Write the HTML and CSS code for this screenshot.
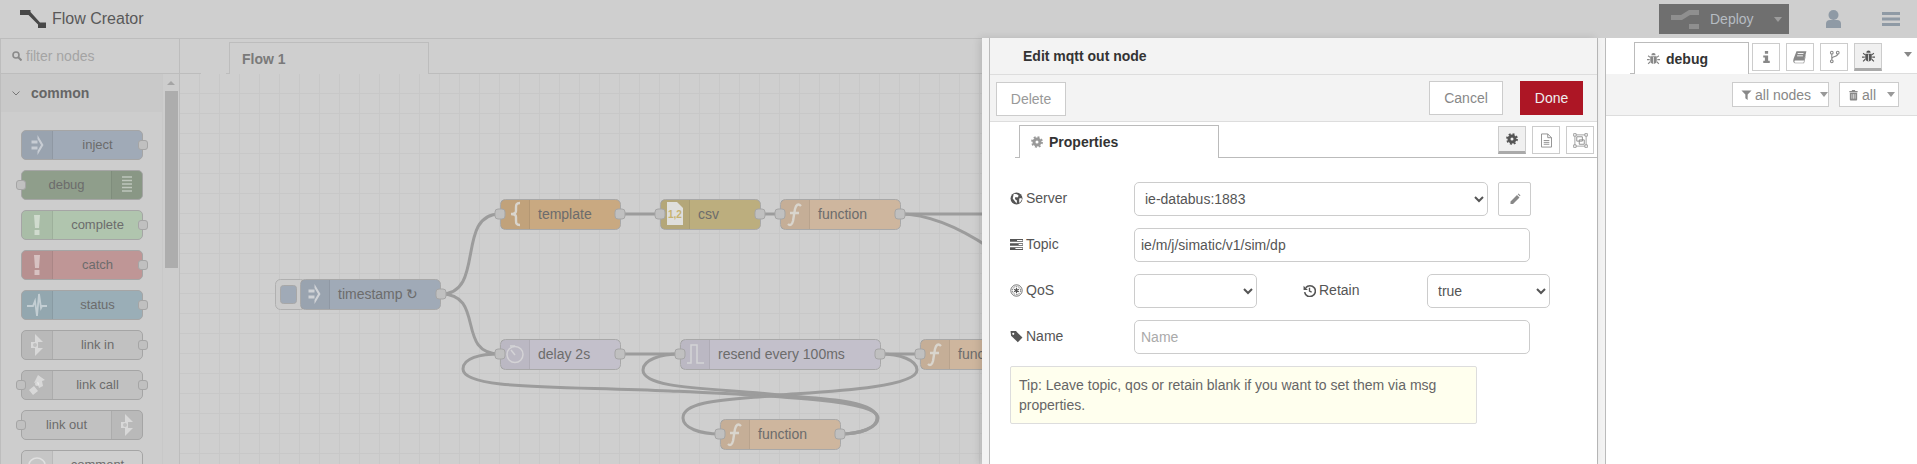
FILE: index.html
```html
<!DOCTYPE html>
<html lang="en">
<head>
<meta charset="utf-8">
<title>Flow Creator</title>
<link rel="stylesheet" href="styles.css">
</head>
<body>
<svg class="defs" aria-hidden="true">
  <symbol id="i-gear" viewBox="0 0 24 24"><circle cx="12" cy="12" r="6" fill="none" stroke="currentColor" stroke-width="6"/><circle cx="12" cy="12" r="10" fill="none" stroke="currentColor" stroke-width="3.600" stroke-dasharray="3.900 3.950"/></symbol>
  <symbol id="i-globe" viewBox="0 0 24 24"><circle cx="12" cy="12" r="11" fill="currentColor"/><path d="M7 3l6 1 3 3-2 3-4-1-1 4 4 3-1 5-3-4-4-5zM17 12l4-1 1 3-3 5-2 1z" fill="#fff"/></symbol>
  <symbol id="i-tasks" viewBox="0 0 24 24"><path d="M0 2h24v5H0zM0 9.500h24v5H0zM0 17h24v5H0z" fill="currentColor"/><path d="M13 3.500h10v2H13zM16 11h7v2h-7zM10 18.500h13v2H10z" fill="#fff"/></symbol>
  <symbol id="i-empire" viewBox="0 0 24 24"><circle cx="12" cy="12" r="10.500" fill="none" stroke="currentColor" stroke-width="1.500"/><circle cx="12" cy="12" r="7.500" fill="none" stroke="currentColor" stroke-width="1.500" stroke-dasharray="3 1.700"/><path d="M12 7v10M7.700 9.500l8.600 5M16.300 9.500l-8.600 5" stroke="currentColor" stroke-width="2.200"/></symbol>
  <symbol id="i-tag" viewBox="0 0 24 24"><path d="M1 2h10l12 12-8.500 8.500L2 10.500z" fill="currentColor"/><circle cx="6" cy="7" r="2" fill="#fff"/></symbol>
  <symbol id="i-history" viewBox="0 0 24 24"><path d="M5 7a10 10 0 1 1-2 8" fill="none" stroke="currentColor" stroke-width="3"/><path d="M1 3l8 8H1z" fill="currentColor"/><path d="M12 7v6l4 2" fill="none" stroke="currentColor" stroke-width="2.500"/></symbol>
  <symbol id="i-file" viewBox="0 0 24 24"><path d="M4 1.500h10l6 6v15H4zM14 1.500v6h6M7.500 12h9M7.500 15h9M7.500 18h9" fill="none" stroke="currentColor" stroke-width="1.400"/></symbol>
  <symbol id="i-group" viewBox="0 0 24 24"><path d="M3 3h18v18H3z" fill="none" stroke="currentColor" stroke-width="1.200"/><path d="M6 6h9v7H6zM10 11h8v7h-8z" fill="none" stroke="currentColor" stroke-width="1.400"/><path d="M1 1h4v4H1zM19 1h4v4h-4zM1 19h4v4H1zM19 19h4v4h-4z" fill="#fff" stroke="currentColor" stroke-width="1.200"/></symbol>
  <symbol id="i-pencil" viewBox="0 0 24 24"><path d="M3 17L16 4l5 5L8 22H3zM17.500 2.500l1.500-1.500 4 4-1.500 1.500z" fill="currentColor"/></symbol>
  <symbol id="i-info" viewBox="0 0 24 24"><path d="M9 1h6v5H9zM6 9h9v10h3v4H6v-4h3v-6H6z" fill="currentColor"/></symbol>
  <symbol id="i-book" viewBox="0 0 24 24"><path d="M6 2h17l-4 16H3.500C2 18 2 22 4 22h14l4-14v2l-3 12.500H3C0 22 0 18 1 15z" fill="currentColor"/><path d="M8 6h10M7 10h10" stroke="#fff" stroke-width="1.500"/></symbol>
  <symbol id="i-fork" viewBox="0 0 24 24"><g fill="none" stroke="currentColor" stroke-width="2"><circle cx="7" cy="4" r="2.500"/><circle cx="18" cy="4" r="2.500"/><circle cx="7" cy="20" r="2.500"/><path d="M7 6.500v11M18 6.500c0 6-11 3-11 9"/></g></symbol>
  <symbol id="i-bug" viewBox="0 0 24 24"><path d="M7 8h10c1 0 1 1 1 1v7c0 4-4 6-6 6s-6-2-6-6V9s0-1 1-1zM8 6a4 4 0 0 1 8 0z" fill="currentColor"/><path d="M12 9v13" stroke="#fff" stroke-width="1.300"/><path d="M6 10L2 7M18 10l4-3M5 14H0M19 14h5M6 18l-4 4M18 18l4 4" stroke="currentColor" stroke-width="2"/></symbol>
  <symbol id="i-filter" viewBox="0 0 24 24"><path d="M1 2h22l-8.500 9v12L9.500 19v-8z" fill="currentColor"/></symbol>
  <symbol id="i-trash" viewBox="0 0 24 24"><path d="M8 3l1-2h6l1 2h5v3H3V3zM4 7h16v15q0 2-2 2H6q-2 0-2-2z" fill="currentColor"/><path d="M8.500 10v10M12 10v10M15.500 10v10" stroke="#fff" stroke-width="1.300"/></symbol>
  <symbol id="n-inject" viewBox="0 0 12 20"><path d="M0 5.500h6v3H0zM0 11.500h6v3H0zM6 0l6 10-6 10v-4l3.500-6L6 4z" fill="currentColor"/></symbol>
  <symbol id="n-debug" viewBox="0 0 10 18"><path d="M0 1h10M0 4.500h10M0 8h10M0 11.500h10M0 15h10" stroke="currentColor" stroke-width="1.600"/></symbol>
  <symbol id="n-alert" viewBox="0 0 8 20"><path d="M1 0h6l-1 13H2zM1.500 15h5v5h-5z" fill="currentColor"/></symbol>
  <symbol id="n-status" viewBox="0 0 20 24"><path d="M0 13h6l2-5 2 15 2-22 2 14 1-2h5" fill="none" stroke="currentColor" stroke-width="1.800"/></symbol>
  <symbol id="n-link" viewBox="0 0 12 22"><path d="M4 0l8 8H4zM4 22l8-8H4zM0 8h7v6H0z" fill="currentColor"/><circle cx="4" cy="11" r="2" fill="#c0c0c0"/></symbol>
  <symbol id="n-call" viewBox="0 0 16 20"><path d="M9 0l7 5-3 1 1 5-4 2-2-6-3 1zM0 15l5-4 4 5-5 4z" fill="currentColor"/><circle cx="8" cy="9" r="2" fill="currentColor"/></symbol>
  <symbol id="n-comment" viewBox="0 0 20 20"><ellipse cx="10" cy="10" rx="8" ry="7" fill="none" stroke="currentColor" stroke-width="1.600"/></symbol>
</svg>

<header class="topbar">
  <svg class="logo" viewBox="0 0 26 18"><path d="M0 0h10.500v2L20 12.500h6V18h-8v-3.500L8.500 5H0z" fill="currentColor"/></svg>
  <span class="app-title">Flow Creator</span>
  <div class="deploy">
    <svg class="deploy-icon" viewBox="0 0 28 19"><path d="M0 5h10l8-5h10v5H19l-8 5H0zM18 14h10v5H18z" fill="currentColor"/></svg>
    <span class="deploy-label">Deploy</span>
    <span class="caret caret-deploy"></span>
  </div>
  <svg class="user" viewBox="0 0 15 18"><circle cx="7.500" cy="5" r="5" fill="currentColor"/><path d="M0 18v-4q0-4 4-4h7q4 0 4 4v4z" fill="currentColor"/></svg>
  <svg class="bars" viewBox="0 0 18 14"><path d="M0 0h18v3H0zM0 5.500h18v3H0zM0 11h18v3H0z" fill="currentColor"/></svg>
</header>

<main class="main">
  <aside class="palette">
    <div class="palette-search">
      <svg class="search-icon" viewBox="0 0 10 10"><circle cx="4" cy="4" r="3" fill="none" stroke="currentColor" stroke-width="1.600"/><path d="M6 6l3.500 3.500" stroke="currentColor" stroke-width="2"/></svg>
      <span>filter nodes</span>
    </div>
    <div class="palette-body">
      <div class="palette-list">
        <div class="cat-head">
          <svg class="chevron" viewBox="0 0 8 5"><path d="M.5.500L4 4 7.500.500" fill="none" stroke="currentColor"/></svg>
          <span>common</span>
        </div>
        <div class="cat-nodes">
          <div class="pnode c-inject"><span class="picon"><svg class="ic-inject"><use href="#n-inject"/></svg></span><span class="plabel">inject</span><i class="pport port-r"></i></div>
          <div class="pnode c-debug"><span class="plabel">debug</span><span class="picon picon-r"><svg class="ic-debug"><use href="#n-debug"/></svg></span><i class="pport port-l"></i></div>
          <div class="pnode c-complete"><span class="picon"><svg class="ic-alert"><use href="#n-alert"/></svg></span><span class="plabel">complete</span><i class="pport port-r"></i></div>
          <div class="pnode c-catch"><span class="picon"><svg class="ic-alert"><use href="#n-alert"/></svg></span><span class="plabel">catch</span><i class="pport port-r"></i></div>
          <div class="pnode c-status"><span class="picon"><svg class="ic-status"><use href="#n-status"/></svg></span><span class="plabel">status</span><i class="pport port-r"></i></div>
          <div class="pnode c-link"><span class="picon"><svg class="ic-link"><use href="#n-link"/></svg></span><span class="plabel">link in</span><i class="pport port-r"></i></div>
          <div class="pnode c-link"><span class="picon"><svg class="ic-call"><use href="#n-call"/></svg></span><span class="plabel">link call</span><i class="pport port-l"></i><i class="pport port-r"></i></div>
          <div class="pnode c-link"><span class="plabel">link out</span><span class="picon picon-r"><svg class="ic-link"><use href="#n-link"/></svg></span><i class="pport port-l"></i></div>
          <div class="pnode c-comment"><span class="picon"><svg class="ic-comment"><use href="#n-comment"/></svg></span><span class="plabel">comment</span></div>
        </div>
      </div>
      <div class="scrollbar">
        <span class="scroll-up"></span>
        <span class="scroll-thumb"></span>
      </div>
    </div>
  </aside>

  <section class="workspace">
    <div class="ws-tabs">
      <span class="ws-lead"></span>
      <span class="ws-tick"></span>
      <div class="ws-tab">Flow 1</div>
      <span class="ws-rest"></span>
    </div>
    <div class="chart">
      <svg class="flow" viewBox="180 74 820 390">
        <g class="wires">
          <path d="M441 294C486 294 455 214 500 214"/>
          <path d="M441 294C486 294 455 354 500 354"/>
          <path d="M620 214H660"/>
          <path d="M760 214H780"/>
          <path d="M900 214H990"/>
          <path d="M900 214C930 214 960 228 990 248"/>
          <path d="M620 354H680"/>
          <path d="M880 354H920"/>
          <path d="M840 434C860 434 878 428 878 418C878 400 780 396 670 391C560 386 463 390 463 369C463 358 480 354 500 354"/>
          <path d="M880 354C900 354 917 360 917 370C917 388 820 392 780 395C730 400 683 400 683 418C683 428 700 434 720 434"/>
          <path d="M840 434C860 434 877 428 877 418C877 398 800 398 780 395C720 388 643 390 643 370C643 360 660 354 680 354"/>
        </g>

        <g>
          <rect class="inject-btn" x="275.500" y="279.500" width="30" height="30" rx="5"/>
          <rect class="inject-btn-face" x="280.500" y="285.500" width="16" height="18" rx="3"/>
          <rect class="node n-blue" x="300.500" y="279.500" width="140" height="30" rx="5"/>
          <path class="node-shade" d="M301 280h28v29h-28z"/>
          <path class="node-sep" d="M329.500 280v29"/>
          <use class="node-icon" href="#n-inject" x="308" y="284" width="13" height="20"/>
          <text class="node-label" x="338" y="299">timestamp ↻</text>
          <rect class="port" x="436" y="289" width="10" height="10" rx="3"/>
        </g>

        <g>
          <rect class="node n-template" x="500.500" y="199.500" width="120" height="30" rx="5"/>
          <path class="node-shade" d="M501 200h28v29h-28z"/>
          <path class="node-sep" d="M529.500 200v29"/>
          <path class="node-stroke" d="M520 203c-4 0-4 2-4 5v3c0 2-2 3-5 3 3 0 5 1 5 3v3c0 3 0 5 4 5"/>
          <text class="node-label" x="538" y="219">template</text>
          <rect class="port" x="495" y="209" width="10" height="10" rx="3"/>
          <rect class="port" x="615" y="209" width="10" height="10" rx="3"/>
        </g>

        <g>
          <rect class="node n-csv" x="660.500" y="199.500" width="100" height="30" rx="5"/>
          <path class="node-shade" d="M661 200h28v29h-28z"/>
          <path class="node-sep" d="M689.500 200v29"/>
          <path class="csv-doc" d="M667 202h10l6 6v17h-16z"/>
          <text class="csv-text" x="668" y="218">1,2</text>
          <text class="node-label" x="698" y="219">csv</text>
          <rect class="port" x="655" y="209" width="10" height="10" rx="3"/>
          <rect class="port" x="755" y="209" width="10" height="10" rx="3"/>
        </g>

        <g>
          <rect class="node n-function" x="780.500" y="199.500" width="120" height="30" rx="5"/>
          <path class="node-shade" d="M781 200h28v29h-28z"/>
          <path class="node-sep" d="M809.500 200v29"/>
          <path class="node-stroke" d="M801 206c-3-3-5-1-6 3l-2 12c-1 4-3 5-5 3M790 213h9"/>
          <text class="node-label" x="818" y="219">function</text>
          <rect class="port" x="775" y="209" width="10" height="10" rx="3"/>
          <rect class="port" x="895" y="209" width="10" height="10" rx="3"/>
        </g>

        <g>
          <rect class="node n-lilac" x="500.500" y="339.500" width="120" height="30" rx="5"/>
          <path class="node-shade" d="M501 340h28v29h-28z"/>
          <path class="node-sep" d="M529.500 340v29"/>
          <circle class="node-thin" cx="515" cy="354.500" r="8"/>
          <path class="node-thin" d="M515 355l-4-5M510 346h5"/>
          <text class="node-label" x="538" y="359">delay 2s</text>
          <rect class="port" x="495" y="349" width="10" height="10" rx="3"/>
          <rect class="port" x="615" y="349" width="10" height="10" rx="3"/>
        </g>

        <g>
          <rect class="node n-lilac" x="680.500" y="339.500" width="200" height="30" rx="5"/>
          <path class="node-shade" d="M681 340h28v29h-28z"/>
          <path class="node-sep" d="M709.500 340v29"/>
          <path class="node-thin" d="M687 363h4v-18h6v18h7"/>
          <text class="node-label" x="718" y="359">resend every 100ms</text>
          <rect class="port" x="675" y="349" width="10" height="10" rx="3"/>
          <rect class="port" x="875" y="349" width="10" height="10" rx="3"/>
        </g>

        <g>
          <rect class="node n-function" x="920.500" y="339.500" width="120" height="30" rx="5"/>
          <path class="node-shade" d="M921 340h28v29h-28z"/>
          <path class="node-sep" d="M949.500 340v29"/>
          <path class="node-stroke" d="M941 346c-3-3-5-1-6 3l-2 12c-1 4-3 5-5 3M930 353h9"/>
          <text class="node-label" x="958" y="359">function</text>
          <rect class="port" x="915" y="349" width="10" height="10" rx="3"/>
        </g>

        <g>
          <rect class="node n-function" x="720.500" y="419.500" width="120" height="30" rx="5"/>
          <path class="node-shade" d="M721 420h28v29h-28z"/>
          <path class="node-sep" d="M749.500 420v29"/>
          <path class="node-stroke" d="M741 426c-3-3-5-1-6 3l-2 12c-1 4-3 5-5 3M730 433h9"/>
          <text class="node-label" x="758" y="439">function</text>
          <rect class="port" x="715" y="429" width="10" height="10" rx="3"/>
          <rect class="port" x="835" y="429" width="10" height="10" rx="3"/>
        </g>
      </svg>
    </div>

    <div class="tray">
      <div class="tray-handle"></div>
      <div class="tray-body">
        <div class="tray-title">Edit mqtt out node</div>
        <div class="tray-actions">
          <button class="btn btn-delete">Delete</button>
          <div class="tray-actions-right">
            <button class="btn btn-cancel">Cancel</button>
            <button class="btn btn-done">Done</button>
          </div>
        </div>
        <div class="tabbar tabbar-tray">
          <span class="tab-tick"></span>
          <div class="tab tab-props"><svg class="ic-tab"><use href="#i-gear"/></svg>Properties</div>
          <div class="tab-rest">
            <span class="icon-btn is-active"><svg class="ic-gear"><use href="#i-gear"/></svg></span>
            <span class="icon-btn"><svg class="ic-btn-lg"><use href="#i-file"/></svg></span>
            <span class="icon-btn"><svg class="ic-btn-lg"><use href="#i-group"/></svg></span>
          </div>
        </div>
        <form class="form">
          <div class="form-row">
            <label class="form-label"><svg class="ic-label"><use href="#i-globe"/></svg>Server</label>
            <select class="field field-server"><option>ie-databus:1883</option></select>
            <span class="edit-btn"><svg class="ic-pencil"><use href="#i-pencil"/></svg></span>
          </div>
          <div class="form-row">
            <label class="form-label"><svg class="ic-label"><use href="#i-tasks"/></svg>Topic</label>
            <input class="field field-wide" value="ie/m/j/simatic/v1/sim/dp">
          </div>
          <div class="form-row">
            <label class="form-label"><svg class="ic-label"><use href="#i-empire"/></svg>QoS</label>
            <select class="field field-small"><option></option></select>
            <label class="form-label form-label-retain"><svg class="ic-label"><use href="#i-history"/></svg>Retain</label>
            <select class="field field-small"><option>true</option></select>
          </div>
          <div class="form-row">
            <label class="form-label"><svg class="ic-label"><use href="#i-tag"/></svg>Name</label>
            <input class="field field-wide" placeholder="Name">
          </div>
          <div class="tip">Tip: Leave topic, qos or retain blank if you want to set them via msg properties.</div>
        </form>
      </div>
    </div>
  </section>

  <div class="separator"></div>

  <aside class="sidebar">
    <div class="tabbar tabbar-side">
      <span class="tab-tick"></span>
      <div class="tab tab-debug"><svg class="ic-tab ic-tab-bug"><use href="#i-bug"/></svg>debug</div>
      <div class="tab-rest tab-rest-side">
        <span class="icon-btn"><svg class="ic-btn"><use href="#i-info"/></svg></span>
        <span class="icon-btn"><svg class="ic-btn ic-btn-book"><use href="#i-book"/></svg></span>
        <span class="icon-btn"><svg class="ic-btn"><use href="#i-fork"/></svg></span>
        <span class="icon-btn is-active"><svg class="ic-btn ic-btn-dark"><use href="#i-bug"/></svg></span>
        <span class="caret caret-side"></span>
      </div>
    </div>
    <div class="side-toolbar">
      <span class="tool-btn tool-nodes"><svg class="ic-tool"><use href="#i-filter"/></svg>all nodes<span class="caret caret-tool"></span></span>
      <span class="tool-btn tool-all"><svg class="ic-tool"><use href="#i-trash"/></svg>all<span class="caret caret-tool caret-tool-far"></span></span>
    </div>
  </aside>
</main>
</body>
</html>
```
FILE: styles.css
```css
* { box-sizing: border-box; }

html, body {
  margin: 0;
  height: 464px;
  overflow: hidden;
}

body {
  font-family: "Liberation Sans", Arial, sans-serif;
  font-size: 14px;
  color: #555;
  background: #fff;
}

.defs { width: 0; height: 0; position: absolute; }

svg { display: block; flex: none; }

/* Top bar */
.topbar {
  height: 38px;
  display: flex;
  align-items: center;
  background: #cfcfcf;
  padding: 0 17px 0 20px;
}

.logo { width: 26px; height: 18px; color: #484848; }

.app-title {
  margin-left: 6px;
  font-size: 16px;
  color: #595959;
  margin-right: auto;
}

.deploy {
  width: 130px;
  height: 30px;
  background: #6f6f6f;
  display: flex;
  align-items: center;
  padding-left: 12px;
  color: #b6bcc2;
}

.deploy-icon { width: 28px; height: 19px; color: #8f8f8f; }
.deploy-label { margin-left: 11px; }

.caret {
  display: block;
  width: 0;
  height: 0;
  flex: none;
  border-left: 4px solid transparent;
  border-right: 4px solid transparent;
  border-top: 5px solid #999;
}

.caret-deploy { margin-left: 20px; border-top-color: #9c9c9c; }
.user { width: 15px; height: 18px; margin-left: 37px; color: #8f9aa5; }
.bars { width: 18px; height: 14px; margin-left: 41px; color: #8f9aa5; }

/* Main area */
.main {
  height: 426px;
  display: flex;
}

/* Palette */
.palette {
  width: 180px;
  flex: none;
  display: flex;
  flex-direction: column;
  background: #cdcdcd;
  border-left: 1px solid #bdbdbd;
  border-right: 1px solid #bdbdbd;
  border-top: 1px solid #bdbdbd;
  overflow: hidden;
}

.palette-search {
  height: 35px;
  flex: none;
  display: flex;
  align-items: center;
  padding-left: 11px;
  font-size: 14px;
  color: #a4a4a4;
  background: #cfcfcf;
  border-bottom: 1px solid #bdbdbd;
}

.search-icon { width: 10px; height: 10px; margin-right: 4px; color: #8a8a8a; }

.palette-body { flex: 1; display: flex; min-height: 0; }

.palette-list { flex: 1; min-width: 0; }

.cat-head {
  height: 38px;
  display: flex;
  align-items: center;
  padding-left: 11px;
  background: #c9c9c9;
  font-weight: bold;
  color: #666;
}

.chevron { width: 8px; height: 5px; margin-right: 11px; color: #777; }

.cat-nodes {
  display: flex;
  flex-direction: column;
  gap: 10px;
  padding: 18px 0 0 20px;
}

.pnode {
  position: relative;
  width: 122px;
  height: 30px;
  flex: none;
  display: flex;
  border: 1px solid #a5a5a5;
  border-radius: 5px;
  font-size: 13px;
  color: #6c6c6c;
}

.picon {
  width: 31px;
  flex: none;
  display: flex;
  align-items: center;
  justify-content: center;
  color: rgba(255, 255, 255, .45);
  background: rgba(0, 0, 0, .04);
  border-right: 1px solid rgba(0, 0, 0, .07);
  border-radius: 4px 0 0 4px;
}

.picon-r {
  border-right: 0;
  border-left: 1px solid rgba(0, 0, 0, .07);
  border-radius: 0 4px 4px 0;
}

.plabel {
  flex: 1;
  text-align: center;
  line-height: 28px;
}

.pport {
  position: absolute;
  top: 9px;
  width: 10px;
  height: 10px;
  background: #c0c0c0;
  border: 1px solid #a5a5a5;
  border-radius: 3px;
}

.port-r { right: -6px; }
.port-l { left: -6px; }

.c-inject { background: #a0aab7; }
.c-debug { background: #8f9e8b; }
.c-complete { background: #b0c5ae; }
.c-catch { background: #bf9696; }
.c-status { background: #9aaeb7; }
.c-link { background: #c1c1c1; }
.c-comment { background: #cfcfcf; }

.ic-inject { width: 13px; height: 20px; }
.ic-debug { width: 10px; height: 18px; }
.ic-alert { width: 8px; height: 20px; }
.ic-status { width: 20px; height: 24px; }
.ic-link { width: 12px; height: 22px; }
.ic-call { width: 16px; height: 20px; }
.ic-comment { width: 20px; height: 20px; }

.scrollbar {
  width: 17px;
  flex: none;
  display: flex;
  flex-direction: column;
  align-items: center;
  background: #cdcdcd;
  border-left: 1px solid #c8c8c8;
}

.scroll-up {
  margin-top: 7px;
  border-left: 4px solid transparent;
  border-right: 4px solid transparent;
  border-bottom: 4px solid #a5a5a5;
}

.scroll-thumb {
  width: 13px;
  height: 177px;
  margin-top: 6px;
  background: #adadad;
}

/* Workspace */
.workspace {
  flex: 1;
  min-width: 0;
  position: relative;
  display: flex;
  flex-direction: column;
  border-top: 1px solid #bdbdbd;
}

.ws-tabs {
  height: 35px;
  flex: none;
  display: flex;
  align-items: flex-end;
  background: #cfcfcf;
}

.ws-lead { width: 21px; border-bottom: 1px solid #bdbdbd; }
.ws-tick { width: 3px; margin-left: 25px; border-bottom: 1px solid #bdbdbd; }

.ws-tab {
  width: 200px;
  height: 32px;
  padding: 8px 0 0 12px;
  font-weight: bold;
  color: #7a7a7a;
  border: 1px solid #bdbdbd;
  border-bottom: 0;
}

.ws-rest { flex: 1; border-bottom: 1px solid #bdbdbd; }

.chart {
  flex: 1;
  min-height: 0;
  overflow: hidden;
  background-color: #cfcfcf;
  background-image:
    linear-gradient(to right, transparent 19px, #c8c8c8 19px),
    linear-gradient(to bottom, transparent 19px, #c8c8c8 19px);
  background-size: 20px 20px;
}

.flow { width: 820px; height: 390px; }

.wires path { fill: none; stroke: #9c9c9c; stroke-width: 3; }

.node { stroke: #a8a8a8; stroke-width: 1; }
.n-blue { fill: #a0aab7; }
.n-template { fill: #c9a981; }
.n-csv { fill: #bcae7e; }
.n-function { fill: #ceb69e; }
.n-lilac { fill: #c3c0cb; }
.node-shade { fill: rgba(0, 0, 0, .04); }
.node-sep { stroke: rgba(0, 0, 0, .1); fill: none; }
.node-icon { color: #cfd2d6; }
.node-stroke { fill: none; stroke: #d9d5cd; stroke-width: 2.400; }
.node-thin { fill: none; stroke: #d4d3d6; stroke-width: 1.500; }
.node-label { font-size: 14px; fill: #6c6c6c; }
.port { fill: #c0c0c0; stroke: #a5a5a5; stroke-width: 1; }
.inject-btn { fill: #cbcbcb; stroke: #b0b0b0; stroke-width: 1; }
.inject-btn-face { fill: #a0aab7; stroke: #a8a8a8; stroke-width: 1; }
.csv-doc { fill: #dfdfdc; }
.csv-text { font-size: 10px; font-weight: bold; fill: #c7b36f; }

/* Edit tray */
.tray {
  position: absolute;
  top: -1px;
  right: 0;
  bottom: 0;
  width: 615px;
  display: flex;
  box-shadow: -2px 0 8px rgba(0, 0, 0, .12);
}

.tray-handle {
  width: 8px;
  flex: none;
  background: #f3f3f3;
  border-right: 1px solid #bbb;
}

.tray-body {
  flex: 1;
  min-width: 0;
  display: flex;
  flex-direction: column;
  background: #fff;
}

.tray-title {
  height: 37px;
  padding: 10px 0 0 33px;
  font-weight: bold;
  font-size: 14px;
  line-height: 16px;
  color: #333;
  background: #f3f3f3;
  border-bottom: 1px solid #ddd;
}

.tray-actions {
  height: 47px;
  display: flex;
  justify-content: space-between;
  padding: 6px 14px 0 6px;
  background: #f3f3f3;
  border-bottom: 1px solid #ddd;
}

.tray-actions-right { display: flex; gap: 17px; }

.btn {
  height: 34px;
  font: 14px "Liberation Sans", Arial, sans-serif;
  border: 1px solid #ccc;
  background: #fff;
  color: #888;
  padding: 0;
  border-radius: 0;
}

.btn-delete { width: 70px; margin-top: 1px; color: #999; }
.btn-cancel { width: 74px; }
.btn-done { width: 63px; background: #ad1625; border-color: #ad1625; color: #eee; }

.tabbar { display: flex; height: 36px; flex: none; }
.tabbar-tray { padding-left: 25px; }
.tabbar-side { padding-left: 24px; }

.tab-tick {
  width: 4px;
  height: 3px;
  align-self: flex-end;
  border-bottom: 1px solid #bbb;
  flex: none;
}

.tab {
  flex: none;
  display: flex;
  align-items: center;
  font-weight: bold;
  color: #333;
  background: #fff;
  border: 1px solid #bbb;
  border-bottom: 0;
}

.tab-props { width: 200px; margin-top: 3px; padding: 0 0 0 11px; }
.tab-debug { width: 115px; margin-top: 4px; padding-left: 12px; }

.ic-tab { width: 12px; height: 12px; margin-right: 6px; color: #999; }
.ic-tab-bug { width: 13px; height: 13px; margin-right: 6px; color: #888; }

.tab-rest {
  flex: 1;
  min-width: 0;
  display: flex;
  justify-content: flex-end;
  gap: 6px;
  padding: 4px 3px 0 0;
  border-bottom: 1px solid #bbb;
}

.tab-rest-side {
  justify-content: flex-start;
  padding: 5px 0 0 3px;
  border-bottom-color: #ddd;
}

.icon-btn {
  width: 28px;
  height: 28px;
  flex: none;
  display: flex;
  align-items: center;
  justify-content: center;
  color: #888;
  background: #fff;
  border: 1px solid #ccc;
}

.icon-btn.is-active {
  background: #f0f0f0;
  border-bottom: 3px solid #aaa;
  color: #555;
}

.ic-btn { width: 13px; height: 14px; }
.ic-btn-book { width: 14px; }
.ic-btn-dark { color: #555; }
.ic-btn-lg { width: 15px; height: 15px; }
.ic-gear { width: 12px; height: 12px; }

.caret-side { margin: 9px 0 0 16px; border-top-color: #888; }

/* Form */
.form {
  flex: 1;
  display: flex;
  flex-direction: column;
  gap: 12px;
  padding: 24px 0 0 20px;
}

.form-row {
  display: flex;
  align-items: center;
  height: 34px;
}

.form-label {
  width: 124px;
  flex: none;
  display: flex;
  align-items: center;
  color: #555;
  margin-top: -2px;
}

.form-label-retain { width: 124px; margin-left: 46px; }

.ic-label { width: 13px; height: 13px; margin-right: 3px; color: #555; }

.field {
  height: 34px;
  font: 14px "Liberation Sans", Arial, sans-serif;
  color: #555;
  background: #fff;
  border: 1px solid #ccc;
  border-radius: 5px;
  padding: 0 6px;
  outline: none;
}

.field::placeholder { color: #aaa; }

.field-server { width: 354px; }
.field-wide { width: 396px; }
.field-small { width: 123px; }

.edit-btn {
  width: 33px;
  height: 34px;
  margin-left: 10px;
  display: flex;
  align-items: center;
  justify-content: center;
  border: 1px solid #ccc;
  border-radius: 2px;
  color: #888;
}

.ic-pencil { width: 12px; height: 12px; }

.tip {
  width: 467px;
  height: 58px;
  padding: 8px;
  line-height: 20px;
  color: #666;
  background: #ffe;
  border: 1px solid #ddd;
  border-radius: 2px;
}

/* Separator and sidebar */
.separator {
  width: 9px;
  flex: none;
  background: #f3f3f3;
  border-left: 1px solid #bbb;
  border-right: 1px solid #bbb;
}

.sidebar {
  width: 311px;
  flex: none;
  display: flex;
  flex-direction: column;
  background: #fff;
}

.side-toolbar {
  height: 42px;
  flex: none;
  display: flex;
  justify-content: flex-end;
  gap: 10px;
  padding: 8px 18px 0 0;
  background: #f3f3f3;
  border-bottom: 1px solid #ddd;
}

.tool-btn {
  height: 25px;
  display: flex;
  align-items: center;
  white-space: nowrap;
  background: #fff;
  border: 1px solid #ccc;
  color: #888;
  font-size: 14px;
}

.tool-nodes { width: 97px; padding-left: 8px; }
.tool-all { width: 60px; padding-left: 8px; }

.ic-tool { width: 11px; height: 12px; margin-right: 3px; color: #888; }
.caret-tool { margin-left: 9px; }
.caret-tool-far { margin-left: 11px; }
```
